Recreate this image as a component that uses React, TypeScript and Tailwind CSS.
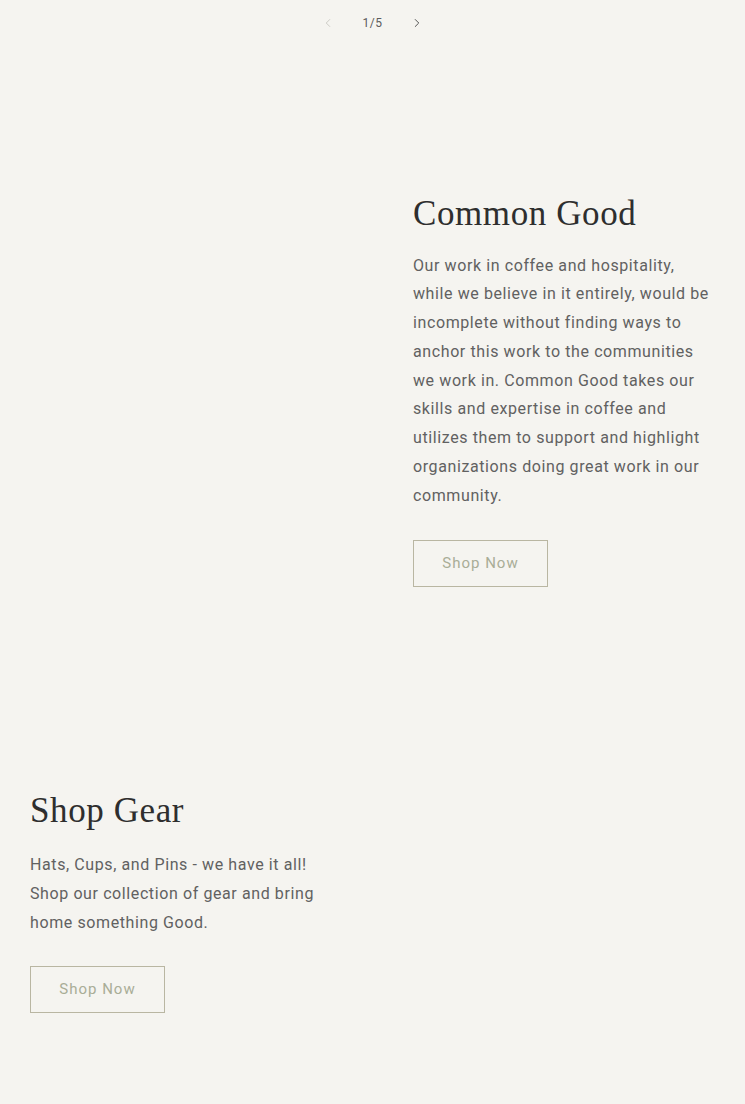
import { ChevronLeft, ChevronRight } from "lucide-react";

const sans = "font-['Roboto','Inter',sans-serif]";

function ShopButton() {
  return (
    <a
      href="#"
      className="inline-flex h-[47px] w-[135px] items-center justify-center border border-[#b9b6a2] text-[15px] tracking-[1px] text-[#a9ad97]"
    >
      Shop Now
    </a>
  );
}

function Pagination() {
  return (
    <div className="flex h-[45px] items-center justify-center gap-[21px] text-[#5c5c5c]">
      <button className="flex size-[28px] items-center justify-center text-[#c9c8c2]">
        <ChevronLeft className="size-[14px]" strokeWidth={1.6} />
      </button>
      <span className="text-[12px] tracking-[0.5px]">1/5</span>
      <button className="flex size-[28px] items-center justify-center text-[#4a4a4a]">
        <ChevronRight className="size-[14px]" strokeWidth={1.6} />
      </button>
    </div>
  );
}

export default function App() {
  return (
    <div className={`min-h-[1104px] bg-[#f5f4f0] ${sans}`}>
      <Pagination />

      <section className="grid grid-cols-[383px_1fr] pt-[146px] pb-[201px]">
        <div />
        <div className="pl-[30px] pr-[30px]">
          <h2 className="font-['Liberation_Serif',serif] text-[35px] leading-[1.3] tracking-[0.6px] text-[#2e2e2e]">
            Common Good
          </h2>
          <p className="mt-[15px] text-[16px] leading-[28.8px] tracking-[0.6px] text-[#616161]">
            Our work in coffee and hospitality, while we believe in it entirely, would be
            incomplete without finding ways to anchor this work to the communities we work
            in. Common Good takes our skills and expertise in coffee and utilizes them to
            support and highlight organizations doing great work in our community.
          </p>
          <div className="mt-[29px]">
            <ShopButton />
          </div>
        </div>
      </section>

      <section className="grid grid-cols-[362px_1fr] pb-[90px]">
        <div className="pl-[30px] pr-[20px]">
          <h2 className="font-['Liberation_Serif',serif] text-[35px] leading-[1.3] tracking-[0.6px] text-[#2e2e2e]">
            Shop Gear
          </h2>
          <p className="mt-[18px] text-[16px] leading-[28.8px] tracking-[0.6px] text-[#616161]">
            Hats, Cups, and Pins - we have it all! Shop our collection of gear and bring
            home something Good.
          </p>
          <div className="mt-[28px]">
            <ShopButton />
          </div>
        </div>
        <div />
      </section>
    </div>
  );
}
